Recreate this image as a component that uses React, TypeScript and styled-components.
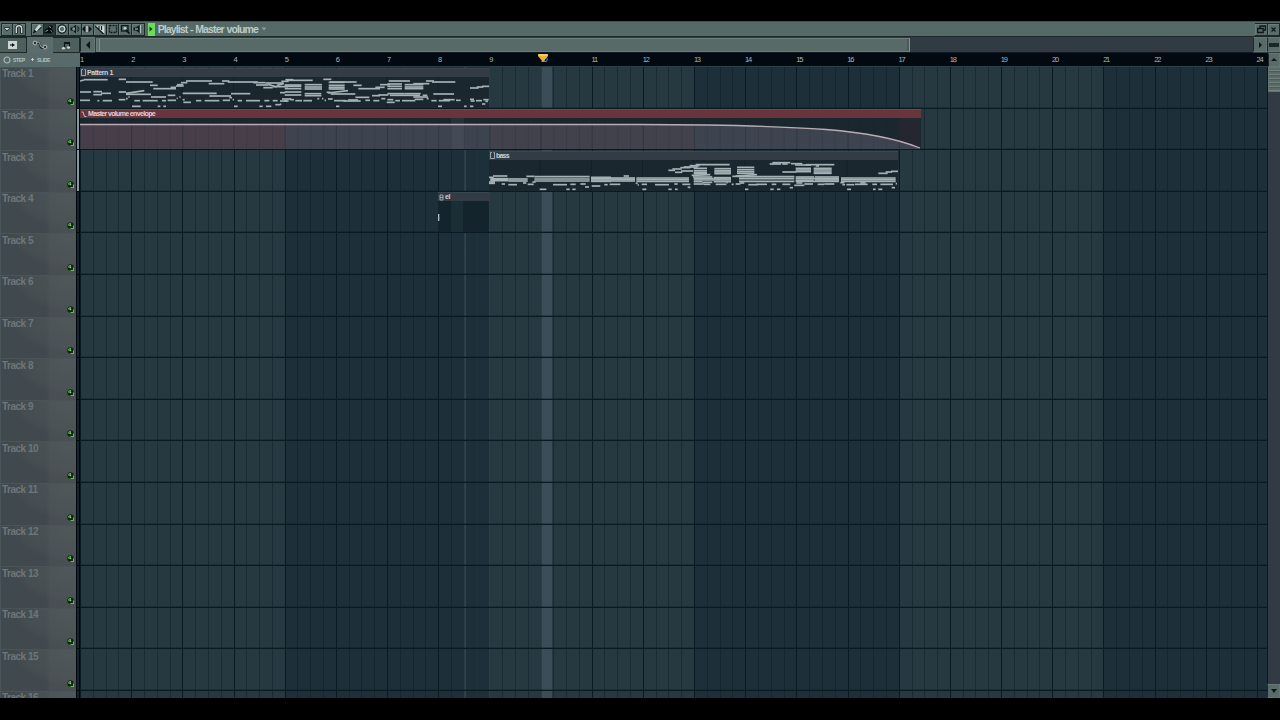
import React from "react";
import styled, { createGlobalStyle } from "styled-components";

const BAR = 51.17;
const ROW = 41.6;

const GlobalStyle = createGlobalStyle`
  html, body { margin: 0; background: #000; }
  body { width: 1280px; height: 720px; overflow: hidden; font-family: "Liberation Sans", Arial, sans-serif; }
  svg { display: block; flex: none; }
`;

const Screen = styled.div`
  box-sizing: border-box;
  width: 1280px;
  height: 720px;
  padding: 21px 0 22px;
  background: #000;
  display: flex;
  flex-direction: column;
  overflow: hidden;
`;

const TitleBar = styled.header`
  box-sizing: border-box;
  height: 16px;
  flex: none;
  display: flex;
  align-items: center;
  padding: 0 0 0 1px;
  background: #556967;
  border-top: 1px solid #42524f;
  border-bottom: 1px solid #1d2929;
`;

const ToolGroup = styled.div<{ $gap: number }>`
  display: flex;
  margin-right: ${(p) => p.$gap}px;
`;

const ToolButton = styled.div<{ $on?: boolean; $w?: number }>`
  box-sizing: border-box;
  width: ${(p) => p.$w ?? 12.63}px;
  height: 13px;
  display: flex;
  align-items: center;
  justify-content: center;
  border: 1px solid #1c2828;
  border-width: 1px 1px 1px 0;
  box-shadow: inset 1px 1px 0 ${(p) => (p.$on ? "#2b3838" : "#6b7d7b")};
  background: ${(p) => (p.$on ? "#2d3a3a" : "#5a6c69")};
  &:first-child { border-left-width: 1px; }
`;

const PlayFlag = styled.div`
  width: 7px;
  height: 13px;
  display: flex;
  align-items: center;
  justify-content: center;
  background: #69dc5b;
`;

const WindowTitle = styled.h1`
  margin: 0 4px 0 3px;
  font-size: 10.5px;
  line-height: 14px;
  letter-spacing: -0.88px;
  word-spacing: 0.6px;
  width: 99px;
  white-space: nowrap;
  color: #bdcbc8;
`;

const Spacer = styled.div`
  flex: 1;
`;

const NavRow = styled.div`
  height: 16px;
  flex: none;
  display: flex;
  background: #323b44;
`;

const Tabs = styled.div`
  width: 80px;
  display: flex;
`;

const Tab = styled.div<{ $w: number; $active?: boolean }>`
  box-sizing: border-box;
  width: ${(p) => p.$w}px;
  height: 16px;
  display: flex;
  align-items: center;
  justify-content: center;
  background: ${(p) => (p.$active ? "#5a6c6b" : "#4e605e")};
  border: solid #1b2728;
  border-width: ${(p) => (p.$active ? "0" : "1px 1px 1px 0")};
`;

const ScrollTrack = styled.div`
  box-sizing: border-box;
  flex: 1;
  display: flex;
  padding: 0 0 1px 1px;
  border-bottom: 1px solid #111a22;
`;

const ScrollThumb = styled.div`
  box-sizing: border-box;
  width: 814px;
  height: 14px;
  margin-top: 1px;
  background: #576a68;
  border: 1px solid #6b7d7b;
  border-right-color: #82928f;
  box-shadow: inset 2px 0 0 #5c706e, inset 3px 0 0 #81918e, inset -2px 0 0 #4a5b5a;
`;

const SquareButton = styled.div<{ $w: number; $h: number }>`
  box-sizing: border-box;
  width: ${(p) => p.$w}px;
  height: ${(p) => p.$h}px;
  flex: none;
  display: flex;
  align-items: center;
  justify-content: center;
  background: #586b69;
  border: 1px solid #647674;
  border-left-color: #1d2929;
`;

const RulerRow = styled.div`
  height: 14px;
  flex: none;
  display: flex;
`;

const Options = styled.div`
  box-sizing: border-box;
  width: 80px;
  display: flex;
  align-items: center;
  gap: 2px;
  padding: 0 0 1px 3px;
  background: #586b6a;
  color: #b3c0be;
  font-size: 5px;
  font-weight: bold;
  line-height: 6px;
`;

const OptionText = styled.span<{ $w: number }>`
  width: ${(p) => p.$w}px;
  white-space: nowrap;
  letter-spacing: -0.35px;
`;

const Ruler = styled.div`
  box-sizing: border-box;
  width: 1188px;
  display: flex;
  overflow: hidden;
  background: #020911;
  border-bottom: 1px solid #2c4047;
  position: relative;
`;

const BarNumber = styled.div`
  box-sizing: border-box;
  flex: none;
  width: ${BAR}px;
  padding: 2px 0 0 0;
  font-size: 7.5px;
  line-height: 10px;
  letter-spacing: -1.2px;
  color: #a9b6bb;
`;

const Playhead = styled.svg`
  position: absolute;
  left: 457px;
  top: 0;
`;

const Body = styled.div`
  flex: 1;
  min-height: 0;
  display: flex;
  overflow: hidden;
`;

const TrackList = styled.div`
  width: 76px;
  flex: none;
`;

const TrackHead = styled.div`
  box-sizing: border-box;
  height: ${ROW}px;
  padding: 0.4px 2px 4px 1px;
  display: flex;
  flex-direction: column;
  justify-content: space-between;
  border-left: 1px solid #4a5559;
  border-top: 1px solid #4a5458;
  background:
    radial-gradient(ellipse 60px 36px at 72px 0, rgba(84, 94, 95, 0.55) 0, rgba(78, 88, 89, 0.3) 85%, transparent 100%),
    linear-gradient(90deg, #40494e 0, #42494e 60%, #484f53 66%, #485053 100%);
`;

const TrackName = styled.div`
  font-size: 10px;
  line-height: 11px;
  font-weight: bold;
  letter-spacing: -0.5px;
  white-space: nowrap;
  color: #6d777b;
`;

const Led = styled.svg`
  align-self: flex-end;
`;

const StripColumn = styled.div`
  box-sizing: border-box;
  width: 4px;
  flex: none;
  background: #03080d;
  padding: 0 1px 0 1px;
`;

const Strip = styled.div<{ $lit: boolean }>`
  box-sizing: border-box;
  height: ${ROW}px;
  border-bottom: 1px solid #03080d;
  background: ${(p) => (p.$lit ? "#87979f" : "#19232b")};
`;

const Grid = styled.div`
  width: 1187px;
  flex: none;
  overflow: hidden;
  background:
    linear-gradient(90deg, transparent 461px, rgba(82, 103, 112, 0.45) 461px, rgba(82, 103, 112, 0.45) 472.5px, transparent 472.5px),
    linear-gradient(90deg, transparent 384.5px, rgba(80, 105, 112, 0.35) 384.5px, rgba(80, 105, 112, 0.35) 385.5px, transparent 385.5px,
      transparent 397px, rgba(80, 105, 112, 0.2) 397px, rgba(80, 105, 112, 0.2) 398px, transparent 398px,
      transparent 409px, rgba(90, 115, 122, 0.4) 409px, rgba(90, 115, 122, 0.4) 410px, transparent 410px),
    repeating-linear-gradient(90deg, #0b1a22 0, #0b1a22 1px, transparent 1px, transparent ${BAR}px),
    repeating-linear-gradient(90deg, rgba(12, 28, 37, 0.5) 0, rgba(12, 28, 37, 0.5) 1px, transparent 1px, transparent ${BAR / 4}px),
    repeating-linear-gradient(90deg, #263941 0, #263941 ${BAR * 4}px, #1d3039 ${BAR * 4}px, #1d3039 ${BAR * 8}px);
`;

const Lane = styled.div`
  box-sizing: border-box;
  height: ${ROW}px;
  padding-top: 0.6px;
  border-bottom: 1.4px solid #0a1922;
  box-shadow: inset 0 -1px 0 rgba(12, 28, 37, 0.35);
`;

const Clip = styled.div<{ $x: number; $w: number; $bg?: string }>`
  box-sizing: border-box;
  margin-left: ${(p) => p.$x}px;
  width: ${(p) => p.$w}px;
  height: 40px;
  display: flex;
  flex-direction: column;
  background: ${(p) => p.$bg ?? "#1a272f"};
  overflow: hidden;
`;

const ClipHead = styled.div<{ $red?: boolean; $tight?: number }>`
  box-sizing: border-box;
  height: 9px;
  flex: none;
  display: flex;
  align-items: center;
  gap: 1px;
  padding: 0 2px 0 1px;
  background: ${(p) => (p.$red ? "#69353c" : "#333b44")};
  border-top: 1px solid ${(p) => (p.$red ? "#7c4249" : "#3c4650")};
  color: ${(p) => (p.$red ? "#e4cfd1" : "#cbd3d7")};
  font-size: 7px;
  line-height: 8px;
  font-weight: bold;
  letter-spacing: ${(p) => p.$tight ?? -0.5}px;
  white-space: nowrap;
`;

const VScroll = styled.div`
  width: 13px;
  flex: none;
  display: flex;
  flex-direction: column;
  justify-content: space-between;
  background: #323b43;
  box-shadow: inset 1px 0 0 #0e181f;
`;

const VThumb = styled.div`
  box-sizing: border-box;
  height: 25px;
  margin-left: 1px;
  border: 1px solid #647674;
  border-right: 0;
  background: repeating-linear-gradient(180deg, #586b69 0, #586b69 2px, #74837f 2px, #74837f 3px, #4a5b59 3px, #4a5b59 4px);
`;

const RulerCap = styled.div`
  width: 12px;
  display: flex;
`;

const DARK = "#0d1718";
const LIGHT = "#ccd6d3";

const toolIcons: { on?: boolean; art: React.ReactNode }[] = [
  { art: <><path d="M3 9l-1.500-1.500L7 .5 9.500 2 5 7z" fill={LIGHT} /><path d="M.5 9.500L2.500 5.500 5 8z" fill={DARK} /><path d="M6 6.500L9.500 3" stroke={DARK} /></> },
  { on: true, art: <><path d="M.5 6l3-2 2-3 3.500 1-1 3 1.500 2.500L6.500 9.500.5 9z" fill="#070d0e" /><path d="M1.500 7.500l2.500-1.500M5 2.500l2 1M6.500 6.500l1.500 1" stroke="#9aa8a5" /></> },
  { art: <><circle cx="5" cy="5" r="4" fill="none" stroke={DARK} strokeWidth="1.400" /><circle cx="5" cy="5" r="2.800" fill="none" stroke={LIGHT} strokeWidth="1.300" /></> },
  { art: <><path d="M.5 3.500h2L6 .5v9l-3.500-3h-2z" fill={DARK} /><path d="M2 5h3M4 3v4" stroke={LIGHT} strokeWidth=".8" /><path d="M7 2.500l2 1.500M7 5h2.500M7 7.500L9 6" stroke={DARK} strokeWidth=".9" /></> },
  { art: <><path d="M3.500 1.500v7L0 5zM6.500 1.500v7L10 5z" fill={DARK} /><path d="M4.300 2v6M5.700 2v6" stroke={LIGHT} strokeWidth=".9" /></> },
  { art: <><path d="M0 1.500h9.500V10z" fill={LIGHT} /><path d="M0 2l8.500 8M4 2v3M6.500 2v4" stroke={DARK} strokeWidth="1.100" /></> },
  { art: <rect x="1.500" y="1.500" width="7" height="7" fill="none" stroke={DARK} strokeWidth="1.300" strokeDasharray="2 1" /> },
  { art: <><rect x="1.500" y="1.500" width="6.500" height="5.500" fill="none" stroke={DARK} strokeWidth="1.200" /><circle cx="5" cy="4.200" r="1.300" fill={LIGHT} /><path d="M6 6l3.500 3.500" stroke={DARK} strokeWidth="1.800" /></> },
  { art: <><path d="M.5 3.500h2.500L7 .5v9L3 6.500H.5z" fill={DARK} /><path d="M7.300 1v8M2 5h3" stroke={LIGHT} strokeWidth="1" /></> },
];

type Seg = [number, number, number, number?];

/* Note runs: start, end, y (and end y when the run climbs or falls), in thirds of a pixel. */
const patternNotes: Seg[] = [
  [0, 12, 42, 39], [12, 83, 38], [116, 138, 37], [138, 218, 45], [210, 233, 55], [220, 288, 65], [272, 288, 61], [288, 311, 57],
  [291, 310, 53], [303, 322, 47], [318, 396, 42], [386, 433, 50], [426, 448, 42], [443, 533, 45], [520, 556, 47], [528, 564, 54],
  [556, 610, 48], [550, 578, 62], [578, 624, 59], [564, 590, 52, 60], [590, 612, 56, 49], [604, 626, 43],
  [0, 33, 75], [40, 66, 74], [40, 66, 83], [63, 93, 79], [116, 138, 75], [138, 193, 79, 71], [138, 213, 82], [213, 258, 90],
  [263, 286, 85], [308, 410, 79], [388, 453, 87], [453, 511, 80],
  [0, 30, 100], [52, 58, 101], [68, 96, 101], [116, 136, 98], [138, 143, 95], [145, 149, 90], [163, 180, 101], [188, 233, 101], [246, 258, 101],
  [263, 288, 100], [290, 293, 94], [298, 302, 90], [310, 333, 106], [308, 314, 98], [348, 364, 101], [374, 418, 101], [428, 450, 100], [448, 456, 92],
  [458, 462, 98], [473, 486, 101], [498, 540, 101], [553, 568, 101], [578, 593, 101], [600, 622, 102],
  [156, 182, 118], [233, 241, 118], [250, 258, 118], [462, 473, 118], [538, 548, 118], [558, 574, 118], [586, 600, 113],
  [616, 640, 38], [620, 698, 40], [730, 754, 37], [750, 830, 45], [820, 845, 55], [835, 900, 65], [886, 914, 61], [900, 930, 53],
  [926, 990, 42], [1000, 1048, 50], [1038, 1062, 42], [1056, 1126, 45],
  [614, 664, 54], [614, 664, 58], [614, 664, 65], [674, 726, 53], [674, 726, 60], [674, 726, 66], [746, 794, 46], [746, 794, 55], [746, 794, 61], [746, 794, 66],
  [922, 966, 51], [922, 966, 58], [922, 966, 65], [974, 1030, 53], [974, 1030, 60], [974, 1030, 65],
  [600, 616, 77], [614, 664, 75], [614, 664, 84], [674, 724, 80], [674, 724, 86], [744, 804, 78, 71], [752, 826, 81], [826, 868, 91], [876, 900, 86],
  [895, 925, 84], [922, 974, 80], [974, 1022, 80], [930, 1020, 85], [1000, 1044, 90], [1060, 1122, 81], [740, 752, 76], [1028, 1042, 85],
  [606, 634, 96], [612, 626, 102], [630, 642, 98], [646, 666, 101], [670, 696, 101], [712, 718, 95], [726, 730, 95], [734, 738, 100], [744, 758, 96],
  [762, 798, 101], [790, 842, 102], [804, 834, 99], [856, 870, 100], [880, 898, 101], [904, 916, 95], [920, 944, 106], [922, 940, 98],
  [946, 960, 101], [966, 1006, 101], [1004, 1030, 97], [1040, 1046, 95], [1054, 1070, 101], [1076, 1110, 101], [1090, 1124, 98], [1128, 1142, 100],
  [1170, 1182, 97], [1172, 1184, 102], [1188, 1206, 101], [1210, 1226, 98], [1206, 1216, 111], [1216, 1224, 103],
  [600, 604, 112], [768, 778, 118], [1074, 1086, 118], [1152, 1160, 118], [1170, 1180, 118],
  [1170, 1196, 63], [1190, 1210, 60], [1206, 1227, 58],
];

const bassNotes: Seg[] = [
  [0, 14, 53], [12, 55, 49], [4, 58, 57], [4, 58, 60], [4, 58, 63], [0, 18, 67], [0, 18, 71], [58, 116, 58], [58, 116, 64], [112, 136, 50],
  [136, 302, 51], [136, 302, 58], [136, 302, 64], [130, 140, 67], [306, 366, 53], [306, 366, 57], [306, 366, 61], [306, 366, 65], [366, 438, 55], [366, 438, 59],
  [366, 438, 64], [404, 420, 49], [442, 600, 55], [442, 600, 60], [442, 600, 65], [440, 446, 71],
  [38, 48, 73], [58, 84, 75], [102, 112, 70], [116, 134, 74], [192, 234, 75], [244, 260, 74], [274, 290, 73], [288, 300, 82], [308, 334, 79],
  [346, 356, 75], [362, 394, 74], [446, 450, 76], [458, 474, 74], [498, 540, 75], [556, 566, 73], [580, 604, 74],
  [152, 172, 89], [232, 242, 89], [250, 260, 89], [460, 472, 89], [538, 548, 89], [558, 566, 89], [596, 604, 83],
  [538, 558, 32], [550, 578, 28], [574, 604, 24], [602, 632, 18], [558, 580, 38], [576, 612, 34], [620, 722, 15], [584, 626, 22],
  [614, 654, 26], [614, 654, 33], [614, 654, 38], [614, 654, 42], [676, 726, 27], [676, 726, 33], [676, 726, 37], [676, 726, 42],
  [744, 796, 23], [744, 796, 30], [744, 796, 36], [744, 796, 41], [608, 664, 47, 45], [740, 804, 49, 45],
  [612, 670, 52], [614, 674, 57], [614, 726, 61], [614, 640, 66], [614, 644, 73], [674, 726, 54], [674, 726, 58], [674, 726, 66], [640, 670, 68],
  [730, 754, 50], [750, 916, 51], [750, 916, 57], [750, 916, 65], [752, 766, 70],
  [644, 664, 74], [680, 712, 74], [712, 716, 69], [728, 734, 74], [740, 754, 73], [778, 806, 75], [802, 834, 74], [848, 862, 74], [880, 904, 74], [902, 912, 84],
  [842, 876, 13], [850, 904, 9], [880, 896, 13], [906, 940, 12], [918, 966, 16], [950, 996, 15], [980, 990, 19], [996, 1036, 15],
  [920, 966, 26], [920, 966, 31], [920, 966, 36], [880, 922, 37], [974, 1028, 26], [974, 1028, 31], [974, 1028, 37], [974, 1028, 41],
  [920, 976, 52], [920, 980, 57], [920, 974, 62], [920, 1050, 65], [978, 1050, 52], [978, 1050, 57], [978, 1050, 61], [916, 946, 77], [922, 940, 70],
  [946, 972, 73], [986, 1006, 74], [1006, 1036, 73], [1054, 1066, 69], [1060, 1068, 75], [1056, 1220, 55], [1056, 1220, 60], [1056, 1220, 65],
  [1072, 1096, 75], [1098, 1136, 74], [1114, 1130, 70], [1150, 1164, 74], [1174, 1212, 74], [1208, 1218, 84], [1220, 1224, 72],
  [768, 778, 89], [844, 854, 89], [864, 874, 89], [1074, 1086, 89], [1152, 1160, 89], [1168, 1180, 89],
  [1168, 1196, 41], [1190, 1210, 37], [1206, 1227, 35],
];

function Notes({ notes, width, dy }: { notes: Seg[]; width: number; dy: number }) {
  return (
    <svg width={width} height="31" viewBox={`0 ${dy} ${width * 3} 93`}>
      {Array.from({ length: 7 }, (_, i) => (
        <path key={i} d={`M${(i + 1) * BAR * 3} 0V160`} stroke="#132027" strokeWidth="3" />
      ))}
      {notes.map(([a, b, y, y2], i) => (
        <path key={i} d={`M${a} ${y}L${b} ${y2 ?? y}`} stroke="#a6b3b6" strokeWidth="5" />
      ))}
    </svg>
  );
}

function Envelope() {
  const curve = "M0 6.500H560C650 6.700 700 8 746 11.500C790 15 820 22 840 30";
  return (
    <svg width="840.500" height="31" viewBox="0 0 840.500 31">
      <rect width="205" height="25" y="6" fill="#463f49" />
      <path d={`${curve}V31H205V6.500`} fill="#3e444f" />
      <rect x="409" y="7" width="205" height="24" fill="#443f4a" opacity="0.500" />
      <path d="M818 0h22v29c-5-2-12-5-22-9z" fill="#252730" />
      {Array.from({ length: 65 }, (_, i) => (
        <path key={i} d={`M${i * (BAR / 4) + 0.5} 0V31`} stroke="#18242c" strokeWidth="1" opacity={i % 4 ? 0.16 : 0.4} />
      ))}
      <rect x="371" width="13" height="31" fill="#5a6670" opacity="0.200" />
      <path d={curve} fill="none" stroke="#bcabb4" strokeWidth="1.300" />
    </svg>
  );
}

const PatternGlyph = () => (
  <svg width="5" height="7" viewBox="0 0 5 7"><path d="M2 .5H.5v6h4v-6H3.500" fill="none" stroke="#b9c3c8" strokeWidth=".8" /></svg>
);
const CurveGlyph = () => (
  <svg width="6" height="7" viewBox="0 0 6 7"><path d="M.5 1h1.500l1.500 4.500H5.500" fill="none" stroke="#d9bfc2" strokeWidth=".9" /></svg>
);
const WaveGlyph = () => (
  <svg width="5" height="7" viewBox="0 0 5 7"><path d="M1 1h3v5H1zM1 3.500h3" fill="none" stroke="#b9c3c8" strokeWidth=".8" /></svg>
);

const Arrow = ({ d }: { d: string }) => (
  <svg width="8" height="8" viewBox="0 0 8 8"><path d={d} fill={DARK} /></svg>
);

function laneContent(track: number) {
  if (track === 1)
    return (
      <Clip $x={0} $w={409}>
        <ClipHead $tight={-0.46}><PatternGlyph />Pattern 1</ClipHead>
        <Notes notes={patternNotes} width={409} dy={30} />
      </Clip>
    );
  if (track === 2)
    return (
      <Clip $x={0} $w={840.5}>
        <ClipHead $red $tight={-0.65}><CurveGlyph />Master volume envelope</ClipHead>
        <Envelope />
      </Clip>
    );
  if (track === 3)
    return (
      <Clip $x={409} $w={409}>
        <ClipHead $tight={-0.8}><PatternGlyph />bass</ClipHead>
        <Notes notes={bassNotes} width={409} dy={1} />
      </Clip>
    );
  if (track === 4)
    return (
      <Clip $x={358} $w={51} $bg="#13242d">
        <ClipHead><WaveGlyph />el</ClipHead>
        <svg width="51" height="31"><path d="M13 0h12v31H13z" fill="#1c2e35" /><path d="M.7 13v7" stroke="#c5ced2" strokeWidth="1.200" /></svg>
      </Clip>
    );
  return null;
}

const tracks = Array.from({ length: 16 }, (_, i) => i + 1);
const bars = Array.from({ length: 24 }, (_, i) => i + 1);

export default function App() {
  return (
    <Screen>
      <GlobalStyle />
      <TitleBar>
        <ToolGroup $gap={5}>
          <ToolButton $w={12}>
            <svg width="8" height="8" viewBox="0 0 8 8"><path d="M.5 2.500h7L4 6.500z" fill={DARK} /><path d="M1.500 3h5L4 5.500z" fill={LIGHT} /></svg>
          </ToolButton>
          <ToolButton $w={13}>
            <svg width="10" height="10" viewBox="0 0 10 10"><path d="M2.300 9.500V4.500a2.700 2.700 0 0 1 5.400 0v5" fill="none" stroke={DARK} strokeWidth="3" /><path d="M2.300 9V4.500a2.700 2.700 0 0 1 5.400 0V9" fill="none" stroke={LIGHT} strokeWidth="1.500" /></svg>
          </ToolButton>
        </ToolGroup>
        <ToolGroup $gap={3}>
          {toolIcons.map((t, i) => (
            <ToolButton key={i} $on={t.on}><svg width="10" height="10" viewBox="0 0 10 10">{t.art}</svg></ToolButton>
          ))}
        </ToolGroup>
        <PlayFlag><svg width="4" height="6" viewBox="0 0 4 6"><path d="M.5.5L3.500 3 .5 5.500z" fill="#123c12" /></svg></PlayFlag>
        <WindowTitle>Playlist - Master volume</WindowTitle>
        <svg width="6" height="4" viewBox="0 0 6 4"><path d="M.5.5h5L3 3.500z" fill="#8c9c99" /></svg>
        <Spacer />
        <ToolButton $w={13}>
          <svg width="9" height="9" viewBox="0 0 9 9"><path d="M3 3V1h5.500v4H7M.7 3.500h5.500v4H.7z" fill="none" stroke={DARK} strokeWidth="1.300" /></svg>
        </ToolButton>
        <ToolButton $w={12}>
          <svg width="7" height="7" viewBox="0 0 7 7"><path d="M1.500 1.500l4 4M5.500 1.500l-4 4" stroke={DARK} strokeWidth="1.200" /></svg>
        </ToolButton>
      </TitleBar>
      <NavRow>
        <Tabs>
          <Tab $w={27}>
            <svg width="10" height="8" viewBox="0 0 10 8"><path d="M0 0h9v8H0z" fill={LIGHT} /><path d="M2 4h3" stroke={DARK} strokeWidth="1.200" /><path d="M4 2v4l3-2z" fill={DARK} /></svg>
          </Tab>
          <Tab $w={26} $active>
            <svg width="16" height="10" viewBox="0 0 16 10"><path d="M4 3.500C7.500 1.500 7.500 3 8 5s1.500 3.500 4.500 3" fill="none" stroke={DARK} strokeWidth="2" /><path d="M4 3C7.500 1 7.500 2.500 8 4.500s1.500 3.500 4.500 3" fill="none" stroke={LIGHT} strokeWidth=".9" /><circle cx="3" cy="3" r="1.900" fill="#2b3838" stroke={LIGHT} strokeWidth=".8" /><circle cx="13" cy="7" r="1.900" fill="#2b3838" stroke={LIGHT} strokeWidth=".8" /></svg>
          </Tab>
          <Tab $w={27}>
            <svg width="10" height="9" viewBox="0 0 10 9"><path d="M3.500 7V1.500h5V6M3.500 2.500h5" fill="none" stroke={DARK} strokeWidth="1.200" /><ellipse cx="2.500" cy="7.300" rx="1.600" ry="1.200" fill={LIGHT} /><ellipse cx="7.500" cy="6.500" rx="1.600" ry="1.200" fill={LIGHT} /></svg>
          </Tab>
        </Tabs>
        <SquareButton $w={15} $h={15}><Arrow d="M6 0v8L2 4z" /></SquareButton>
        <ScrollTrack><ScrollThumb /></ScrollTrack>
        <SquareButton $w={14} $h={15}><Arrow d="M3 1v6l3-3z" /></SquareButton>
        <SquareButton $w={13} $h={15}>
          <svg width="10" height="4"><rect width="10" height="4" fill="#1a2627" /></svg>
        </SquareButton>
      </NavRow>
      <RulerRow>
        <Options>
          <svg width="8" height="8" viewBox="0 0 8 8"><circle cx="4" cy="4" r="3" fill="none" stroke="#a9b7b4" strokeWidth="1.200" /></svg>
          <OptionText $w={15}>STEP</OptionText>
          <svg width="5" height="5" viewBox="0 0 5 5"><path d="M2.500 1v3M1 2.500h3" stroke={LIGHT} strokeWidth=".9" /></svg>
          <OptionText $w={15}>SLIDE</OptionText>
        </Options>
        <Ruler>
          {bars.map((n) => <BarNumber key={n}>{n}</BarNumber>)}
          <Playhead width="12" height="10" viewBox="0 0 12 10"><path d="M1 1h10v2L6 9 1 3z" fill="#e9b13c" /><path d="M2 2h8" stroke="#ffe08a" /></Playhead>
        </Ruler>
        <RulerCap><SquareButton $w={12} $h={14}><Arrow d="M4 2l3 3H1z" /></SquareButton></RulerCap>
      </RulerRow>
      <Body>
        <TrackList>
          {tracks.map((n) => (
            <TrackHead key={n}>
              <TrackName>Track {n}</TrackName>
              <Led width="7" height="7" viewBox="0 0 7 7"><circle cx="3.500" cy="3.500" r="3.200" fill="#10240f" /><path d="M1.500 3.500a2 2 0 0 1 2.500-2M6.500 3.500v3h-3" fill="none" stroke="#62b85c" strokeWidth="1.100" /><circle cx="3.300" cy="3.300" r="1" fill="#7be070" /></Led>
            </TrackHead>
          ))}
        </TrackList>
        <StripColumn>
          {tracks.map((n) => <Strip key={n} $lit={n === 2 || n === 3} />)}
        </StripColumn>
        <Grid>
          {tracks.map((n) => <Lane key={n}>{laneContent(n)}</Lane>)}
        </Grid>
        <VScroll>
          <VThumb />
          <SquareButton $w={13} $h={14}><Arrow d="M1 2h6L4 6z" /></SquareButton>
        </VScroll>
      </Body>
    </Screen>
  );
}
